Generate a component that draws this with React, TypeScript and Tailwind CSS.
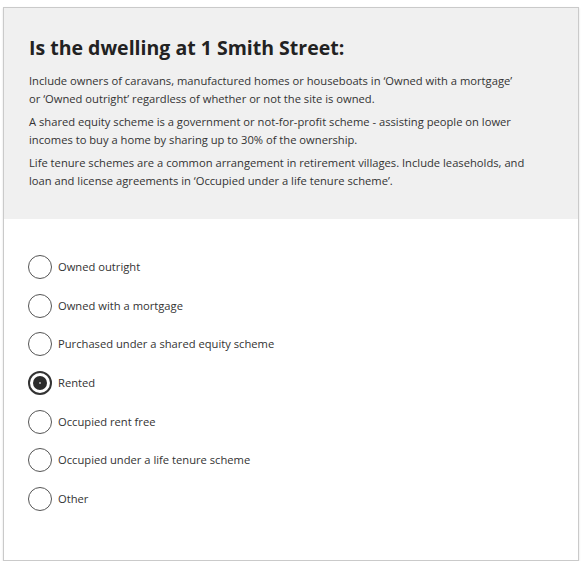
import React from "react";

const options = [
  "Owned outright",
  "Owned with a mortgage",
  "Purchased under a shared equity scheme",
  "Rented",
  "Occupied rent free",
  "Occupied under a life tenure scheme",
  "Other",
];

const paragraphs: [string, string][] = [
  [
    "Include owners of caravans, manufactured homes or houseboats in ‘Owned with a mortgage’",
    "or ‘Owned outright’ regardless of whether or not the site is owned.",
  ],
  [
    "A shared equity scheme is a government or not-for-profit scheme - assisting people on lower",
    "incomes to buy a home by sharing up to 30% of the ownership.",
  ],
  [
    "Life tenure schemes are a common arrangement in retirement villages. Include leaseholds, and",
    "loan and license agreements in ‘Occupied under a life tenure scheme’.",
  ],
];

function Radio({ checked }: { checked: boolean }) {
  if (checked) {
    return (
      <span className="flex h-[24px] w-[24px] shrink-0 items-center justify-center rounded-full border-[2px] border-[#333] bg-white">
        <span className="flex h-[14px] w-[14px] items-center justify-center rounded-full bg-[#2b2b2b]">
          <span className="h-[2px] w-[2px] rounded-full bg-[#bbb]" />
        </span>
      </span>
    );
  }
  return (
    <span className="h-[24px] w-[24px] shrink-0 rounded-full border-[1.5px] border-[#555] bg-white" />
  );
}

export default function App() {
  return (
    <div className="bg-white pl-[3px] pt-[7px]" style={{ fontFamily: '"Open Sans", "Noto Sans", sans-serif' }}>
      <div className="flex h-[554px] w-[576px] flex-col border border-[#cacaca] shadow-[0_1px_2px_rgba(0,0,0,0.12)]">
        <div className="h-[211px] bg-[#f0f0f0] pl-[25px] pr-[20px] pt-[26px]">
          <h1 className="text-[19.5px] font-bold leading-[28px] text-[#222]">Is the dwelling at 1 Smith Street:</h1>
          <div className="mt-[10px] flex flex-col gap-[5px] text-[11.2px] leading-[18px] text-[#333]">
            {paragraphs.map(([a, b]) => (
              <p key={a} className="whitespace-nowrap">
                {a}
                <br />
                {b}
              </p>
            ))}
          </div>
        </div>
        <div className="flex flex-col gap-[14.7px] pl-[24px] pt-[36px]">
          {options.map((o, i) => (
            <label key={o} className="flex items-center gap-[6px]">
              <Radio checked={i === 3} />
              <span className="text-[11.2px] leading-[18px] text-[#333]">{o}</span>
            </label>
          ))}
        </div>
      </div>
    </div>
  );
}
